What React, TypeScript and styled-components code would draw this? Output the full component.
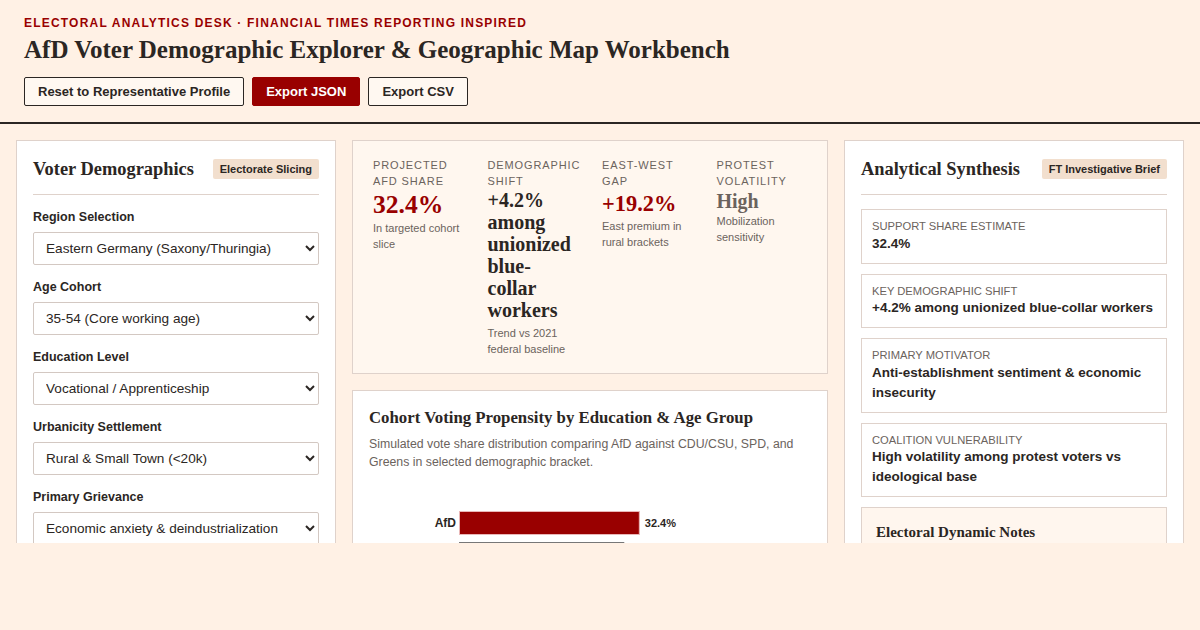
import React, { useState } from 'react';
import styled, { createGlobalStyle } from 'styled-components';

const ink = '#2b2623';
const muted = '#6b635d';
const claret = '#990000';
const rule = '#dfd2cb';

const GlobalStyle = createGlobalStyle`
    * {
        box-sizing: border-box;
    }
    body {
        margin: 0;
        background: #fff1e5;
        color: ${ink};
        font-family: 'Liberation Sans', Arial, sans-serif;
    }
`;

const Header = styled.header`
    padding: 16px 24px;
    border-bottom: 2px solid ${ink};
`;

const Eyebrow = styled.div`
    font-size: 12px;
    line-height: 15px;
    font-weight: 700;
    letter-spacing: 1.2px;
    text-transform: uppercase;
    color: ${claret};
`;

const Title = styled.h1`
    margin: 4px 0 12px;
    font-family: 'Liberation Serif', 'Times New Roman', serif;
    font-size: 25px;
    line-height: 30px;
    font-weight: 700;
    color: ${ink};
`;

const Toolbar = styled.div`
    display: flex;
    gap: 8px;
`;

const ActionButton = styled.button<{ $primary?: boolean }>`
    padding: 6px 13px;
    font-family: 'Liberation Sans', Arial, sans-serif;
    font-size: 13px;
    line-height: 15px;
    font-weight: 700;
    border-radius: 2px;
    border: 1px solid ${(p) => (p.$primary ? claret : ink)};
    background: ${(p) => (p.$primary ? claret : '#fff8f1')};
    color: ${(p) => (p.$primary ? '#fff' : ink)};
    cursor: pointer;
`;

const Workspace = styled.main`
    display: grid;
    grid-template-columns: 320px minmax(0, 1fr) 340px;
    gap: 16px;
    align-items: start;
    height: 419px;
    padding: 16px 16px 0;
    overflow: hidden;
`;

const Panel = styled.section<{ $tone?: 'cream' }>`
    background: ${(p) => (p.$tone === 'cream' ? '#fff7ef' : '#fff')};
    border: 1px solid ${rule};
    padding: 16px;
`;

const Column = styled.div`
    display: flex;
    flex-direction: column;
    gap: 16px;
`;

const PanelHeader = styled.div`
    display: flex;
    justify-content: space-between;
    align-items: center;
    padding-bottom: 13px;
    margin-bottom: 14px;
    border-bottom: 1px solid ${rule};
`;

const PanelTitle = styled.h2`
    margin: 0;
    font-family: 'Liberation Serif', 'Times New Roman', serif;
    font-size: 18.4px;
    line-height: 24px;
    font-weight: 700;
`;

const Badge = styled.span`
    padding: 3px 7px;
    font-size: 11px;
    line-height: 14px;
    font-weight: 700;
    background: #f2dfce;
    border-radius: 2px;
    color: ${ink};
`;

const Field = styled.label`
    display: block;
    margin-bottom: 14px;
`;

const FieldLabel = styled.span`
    display: block;
    margin-bottom: 7px;
    font-size: 12.5px;
    line-height: 16px;
    font-weight: 700;
`;

const Select = styled.select`
    width: 100%;
    height: 33px;
    padding: 0 8px;
    font-family: 'Liberation Sans', Arial, sans-serif;
    font-size: 13.6px;
    color: ${ink};
    background: #fff;
    border: 1px solid #d3c8c2;
    border-radius: 2px;
`;

const KpiPanel = styled(Panel)`
    display: grid;
    grid-template-columns: repeat(4, minmax(0, 1fr));
    gap: 24px;
    padding: 16px 20px;
`;

const KpiLabel = styled.div`
    font-size: 11px;
    line-height: 16px;
    letter-spacing: 0.08em;
    text-transform: uppercase;
    color: ${muted};
`;

const valueSizes = {
    big: '25.6px/31px',
    mid: '22.4px/29px',
    long: '20px/22px',
    small: '20px/24px',
};

const KpiValue = styled.div<{ $size: keyof typeof valueSizes; $color: string }>`
    font: 700 ${(p) => valueSizes[p.$size]} 'Liberation Serif', 'Times New Roman', serif;
    color: ${(p) => p.$color};
    margin-bottom: ${(p) => (p.$size === 'long' ? '4px' : '0')};
`;

const KpiNote = styled.div`
    font-size: 11px;
    line-height: 16px;
    color: ${muted};
`;

const ChartTitle = styled.h3`
    margin: 0 0 6px;
    font-family: 'Liberation Serif', 'Times New Roman', serif;
    font-size: 16.8px;
    line-height: 22px;
    font-weight: 700;
`;

const ChartNote = styled.p`
    margin: 0 0 12px;
    font-size: 12.3px;
    line-height: 18px;
    color: ${muted};
`;

const Chart = styled.svg`
    display: block;
    width: 100%;
    height: 200px;
`;

const Stack = styled.div`
    display: flex;
    flex-direction: column;
    gap: 10px;
`;

const Card = styled.div`
    border: 1px solid ${rule};
    background: #fff;
    padding: 9px 10px;
`;

const CardLabel = styled.div`
    font-size: 11.2px;
    line-height: 14.5px;
    text-transform: uppercase;
    color: ${muted};
`;

const CardValue = styled.div`
    font-size: 13.5px;
    line-height: 20px;
    font-weight: 700;
    color: ${ink};
`;

const Notes = styled.div`
    border: 1px solid ${rule};
    background: #fff6ee;
    padding: 14px;
`;

const NotesTitle = styled.h4`
    margin: 0 0 8px;
    font-family: 'Liberation Serif', 'Times New Roman', serif;
    font-size: 15px;
    line-height: 20px;
    font-weight: 700;
`;

const NotesText = styled.p`
    margin: 0;
    font-size: 12px;
    line-height: 18px;
    color: ${muted};
`;

const fields = [
    {
        label: 'Region Selection',
        options: ['Eastern Germany (Saxony/Thuringia)', 'Western Germany (NRW/Bavaria)', 'Berlin Metro'],
    },
    { label: 'Age Cohort', options: ['35-54 (Core working age)', '18-34 (Young voters)', '55+ (Retirees)'] },
    { label: 'Education Level', options: ['Vocational / Apprenticeship', 'University degree', 'Secondary only'] },
    { label: 'Urbanicity Settlement', options: ['Rural & Small Town (<20k)', 'Mid-size City', 'Metropolitan'] },
    {
        label: 'Primary Grievance',
        options: ['Economic anxiety & deindustrialization', 'Migration policy', 'Energy prices'],
    },
    { label: 'Turnout Model', options: ['High-mobilization scenario', 'Baseline turnout'] },
];

const kpis = [
    { label: 'Projected AfD share', value: '32.4%', note: 'In targeted cohort slice', size: 'big', color: claret },
    {
        label: 'Demographic shift',
        value: '+4.2% among unionized blue-collar workers',
        note: 'Trend vs 2021 federal baseline',
        size: 'long',
        color: ink,
    },
    { label: 'East-West gap', value: '+19.2%', note: 'East premium in rural brackets', size: 'mid', color: claret },
    { label: 'Protest volatility', value: 'High', note: 'Mobilization sensitivity', size: 'small', color: '#6b635d' },
] as const;

const parties = [
    { name: 'AfD', share: 32.4, fill: claret, stroke: '#e9b7b7' },
    { name: 'CDU/CSU', share: 29.6, fill: '#3b3632', stroke: '#777' },
    { name: 'SPD', share: 14.1, fill: '#c8504b', stroke: '#e6b0ad' },
    { name: 'Greens', share: 6.3, fill: '#5d8a4e', stroke: '#b9d0b0' },
];

const synthesis = [
    { label: 'Support share estimate', value: '32.4%' },
    { label: 'Key demographic shift', value: '+4.2% among unionized blue-collar workers' },
    { label: 'Primary motivator', value: 'Anti-establishment sentiment & economic insecurity' },
    { label: 'Coalition vulnerability', value: 'High volatility among protest voters vs ideological base' },
];

const App = () => {
    const [values, setValues] = useState(fields.map((f) => f.options[0]));

    return (
        <>
            <GlobalStyle />
            <Header>
                <Eyebrow>Electoral Analytics Desk · Financial Times Reporting Inspired</Eyebrow>
                <Title>AfD Voter Demographic Explorer &amp; Geographic Map Workbench</Title>
                <Toolbar>
                    <ActionButton onClick={() => setValues(fields.map((f) => f.options[0]))}>
                        Reset to Representative Profile
                    </ActionButton>
                    <ActionButton $primary>Export JSON</ActionButton>
                    <ActionButton>Export CSV</ActionButton>
                </Toolbar>
            </Header>
            <Workspace>
                <Panel>
                    <PanelHeader>
                        <PanelTitle>Voter Demographics</PanelTitle>
                        <Badge>Electorate Slicing</Badge>
                    </PanelHeader>
                    {fields.map((f, i) => (
                        <Field key={f.label}>
                            <FieldLabel>{f.label}</FieldLabel>
                            <Select
                                value={values[i]}
                                onChange={(e) => {
                                    const next = [...values];
                                    next[i] = e.target.value;
                                    setValues(next);
                                }}
                            >
                                {f.options.map((o) => (
                                    <option key={o}>{o}</option>
                                ))}
                            </Select>
                        </Field>
                    ))}
                </Panel>
                <Column>
                    <KpiPanel $tone="cream">
                        {kpis.map((k) => (
                            <div key={k.label}>
                                <KpiLabel>{k.label}</KpiLabel>
                                <KpiValue $size={k.size} $color={k.color}>
                                    {k.value}
                                </KpiValue>
                                <KpiNote>{k.note}</KpiNote>
                            </div>
                        ))}
                    </KpiPanel>
                    <Panel>
                        <ChartTitle>Cohort Voting Propensity by Education &amp; Age Group</ChartTitle>
                        <ChartNote>
                            Simulated vote share distribution comparing AfD against CDU/CSU, SPD, and Greens in
                            selected demographic bracket.
                        </ChartNote>
                        <Chart>
                            {parties.map((p, i) => {
                                const y = 28 + i * 31;
                                const w = p.share * 5.55;
                                return (
                                    <g key={p.name}>
                                        <text
                                            x={87}
                                            y={y + 16}
                                            textAnchor="end"
                                            fontSize="12"
                                            fontWeight="700"
                                            fill={ink}
                                            fontFamily="Liberation Sans, Arial, sans-serif"
                                        >
                                            {p.name}
                                        </text>
                                        <rect
                                            x={90.5}
                                            y={y + 0.5}
                                            width={w}
                                            height={23}
                                            fill={p.fill}
                                            stroke={p.stroke}
                                        />
                                        <text
                                            x={w + 96}
                                            y={y + 16}
                                            fontSize="11"
                                            fontWeight="700"
                                            fill={ink}
                                            fontFamily="Liberation Sans, Arial, sans-serif"
                                        >
                                            {p.share.toFixed(1)}%
                                        </text>
                                    </g>
                                );
                            })}
                        </Chart>
                    </Panel>
                </Column>
                <Panel>
                    <PanelHeader>
                        <PanelTitle>Analytical Synthesis</PanelTitle>
                        <Badge>FT Investigative Brief</Badge>
                    </PanelHeader>
                    <Stack>
                        {synthesis.map((s) => (
                            <Card key={s.label}>
                                <CardLabel>{s.label}</CardLabel>
                                <CardValue>{s.value}</CardValue>
                            </Card>
                        ))}
                        <Notes>
                            <NotesTitle>Electoral Dynamic Notes</NotesTitle>
                            <NotesText>
                                Support concentrates among vocationally trained workers in shrinking rural districts,
                                where protest motivation outweighs programmatic alignment.
                            </NotesText>
                        </Notes>
                    </Stack>
                </Panel>
            </Workspace>
        </>
    );
};

export default App;
